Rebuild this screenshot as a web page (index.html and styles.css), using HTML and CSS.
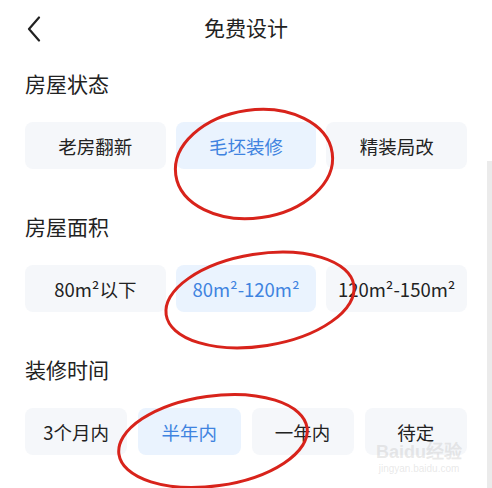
FILE: index.html
```html
<!DOCTYPE html>
<html lang="zh-CN">
<head>
  <meta charset="UTF-8" />
  <meta name="viewport" content="width=device-width, initial-scale=1.0"/>
  <title>免费设计</title>
  <link rel="stylesheet" href="styles.css">
</head>
<body>
  <div class="page">
    <header class="top-bar">
      <a class="back" href="#">
        <svg width="14" height="26" viewBox="0 0 14 26">
          <path d="M12 1.5 L2 13 L12 24.5" fill="none" stroke="#222" stroke-width="2.2" stroke-linecap="round" stroke-linejoin="round"/>
        </svg>
      </a>
      <h1>免费设计</h1>
    </header>

    <section class="group">
      <h2>房屋状态</h2>
      <div class="options cols-3">
        <button class="opt">老房翻新</button>
        <button class="opt active">毛坯装修</button>
        <button class="opt">精装局改</button>
      </div>
    </section>

    <section class="group">
      <h2>房屋面积</h2>
      <div class="options cols-3">
        <button class="opt">80m²以下</button>
        <button class="opt active">80m²-120m²</button>
        <button class="opt">120m²-150m²</button>
      </div>
    </section>

    <section class="group">
      <h2>装修时间</h2>
      <div class="options cols-4">
        <button class="opt">3个月内</button>
        <button class="opt active">半年内</button>
        <button class="opt">一年内</button>
        <button class="opt">待定</button>
      </div>
    </section>

    <!-- scroll indicator -->
    <div class="scroll-track"></div>

    <!-- red hand-drawn marks -->
    <svg class="marks" width="492" height="488" viewBox="0 0 492 488">
      <g fill="none" stroke="#d8231b" stroke-width="3">
        <ellipse cx="254" cy="164" rx="79" ry="54" transform="rotate(-8 254 164)"/>
        <ellipse cx="260" cy="300" rx="95" ry="46" transform="rotate(-9 260 300)"/>
        <ellipse cx="213" cy="441" rx="95" ry="45" transform="rotate(-8 213 441)"/>
      </g>
    </svg>

    <div class="watermark">
      <span class="wm-logo">Bai<b>du</b>经验</span>
      <span class="wm-url">jingyan.baidu.com</span>
    </div>
  </div>
</body>
</html>
```

FILE: styles.css
```css
* {
  box-sizing: border-box;
}

body {
  margin: 0;
  background: #fff;
  font-family: "Noto Sans CJK SC", "Noto Sans", sans-serif;
  color: #222;
}

.page {
  position: relative;
  width: 492px;
  height: 488px;
  overflow: hidden;
  padding: 0 25px;
}

.top-bar {
  height: 56px;
  display: flex;
  align-items: center;
  justify-content: center;
  position: relative;
}

.back {
  position: absolute;
  left: 2px;
  top: 16px;
  display: block;
  line-height: 0;
}

.top-bar h1 {
  margin: 0 0 2px;
  font-size: 21px;
  font-weight: 400;
  color: #222;
}

.group {
  padding-top: 15px;
  margin-bottom: 30px;
}

.group h2 {
  margin: 0 0 27px;
  height: 24px;
  line-height: 24px;
  font-size: 21px;
  font-weight: 400;
  color: #222;
}

.options {
  display: grid;
  gap: 10px;
}

.cols-3 {
  grid-template-columns: repeat(3, 1fr);
}

.cols-4 {
  grid-template-columns: repeat(4, 1fr);
  gap: 11px;
}

.opt {
  height: 47px;
  border: none;
  border-radius: 8px;
  background: #f5f7fa;
  font-family: inherit;
  font-size: 18.5px;
  color: #222;
  padding: 0;
  white-space: nowrap;
}

.opt.active {
  background: #eaf3fe;
  color: #3f83e0;
}

.scroll-track {
  position: absolute;
  right: 0;
  top: 161px;
  bottom: 0;
  width: 5px;
  background: #ebebeb;
}

.marks {
  position: absolute;
  left: 0;
  top: 0;
  pointer-events: none;
}

.watermark {
  position: absolute;
  left: 376px;
  top: 442px;
  display: flex;
  flex-direction: column;
  align-items: center;
  color: rgba(205, 205, 205, 0.45);
  font-family: "Liberation Sans", sans-serif;
}

.wm-logo {
  font-size: 18px;
  font-weight: 700;
  line-height: 20px;
}

.wm-url {
  font-size: 10px;
  line-height: 14px;
}
```
